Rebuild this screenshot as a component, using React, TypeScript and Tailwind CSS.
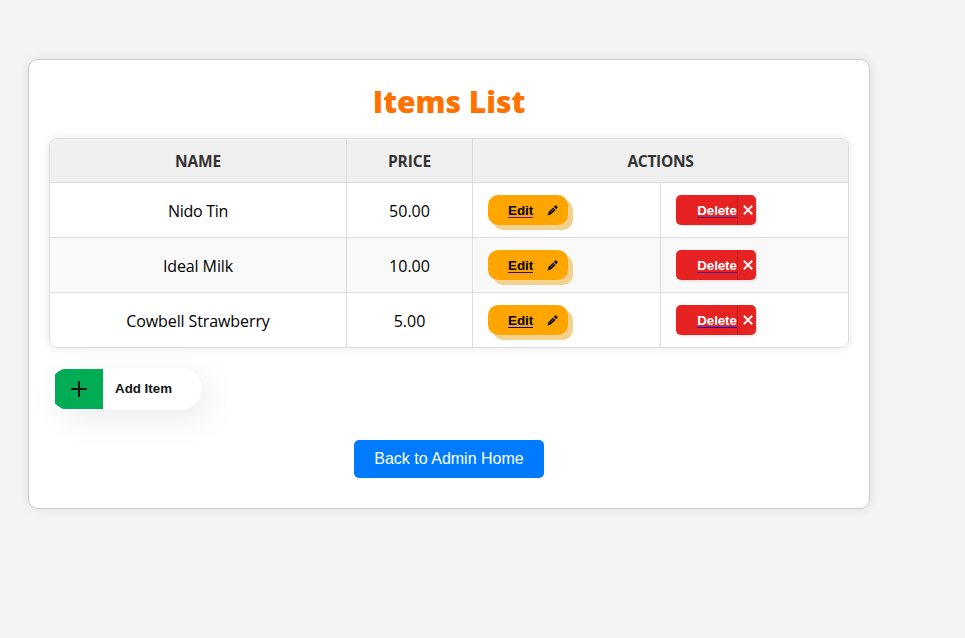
import React from "react";

type Item = { name: string; price: string; tracking: string; editLine: string; deleteLine: string };

const items: Item[] = [
  { name: "Nido Tin", price: "50.00", tracking: "tracking-[-0.3px]", editLine: "bg-[#551a8b]", deleteLine: "bg-[#551a8b]" },
  { name: "Ideal Milk", price: "10.00", tracking: "tracking-[-0.1px]", editLine: "bg-[#2a0bb0]", deleteLine: "bg-[#551a8b]" },
  { name: "Cowbell Strawberry", price: "5.00", tracking: "tracking-[-0.1px]", editLine: "bg-[#0000ee]", deleteLine: "bg-[#0000ee]" },
];

function EditButton({ line }: { line: string }) {
  return (
    <button className="flex h-[30px] w-[80px] items-center rounded-[10px] bg-[#ffa500] pl-5 font-['Liberation_Sans',Arial,sans-serif] text-[13.333px] font-bold text-black shadow-[5px_5px_0_#f3d18f]">
      <span className="mt-[2px] flex w-[25px] flex-col">
        <span className="h-[13px] leading-[14px]">Edit</span>
        <span className={`h-px w-full ${line}`} />
      </span>
      <svg className="ml-[14px] h-[11px] w-[11px]" viewBox="0 0 11 11" fill="#111">
        <path d="M7.6.9C8.2.3 9.2.3 9.8.8l.4.4c.6.6.6 1.5 0 2.1L9.3 4.2 6.7 1.8zM6.1 2.4l2.6 2.5-4.9 4.6L.5 10.5l1-3.5z" />
        <path d="M3.6 7.3l3.4-3.3" stroke="#b97800" strokeWidth=".6" />
      </svg>
    </button>
  );
}

function DeleteButton({ line }: { line: string }) {
  return (
    <button className="flex h-[30px] w-[80px] items-center overflow-hidden rounded-[5px] bg-[#e62222] pl-[21px] font-['Liberation_Sans',Arial,sans-serif] text-[13.333px] font-bold text-white shadow-[1px_1px_3px_rgba(0,0,0,0.15)]">
      <span className="mt-[2px] flex w-[40px] shrink-0 flex-col">
        <span className="h-[13px] whitespace-nowrap leading-[14px] tracking-[-0.1px]">Delete</span>
        <span className={`h-px w-full ${line}`} />
      </span>
      <span className="flex h-full flex-1 items-center border-l border-[#c41b1b] pl-[5px]">
        <svg className="h-[10px] w-[10px]" viewBox="0 0 10 10" stroke="#eee" strokeWidth="2.1" fill="none">
          <path d="M.7.7l8.6 8.6M9.3.7L.7 9.3" />
        </svg>
      </span>
    </button>
  );
}

export default function App() {
  return (
    <div className="min-h-screen bg-[#f4f4f4] pt-[59px] pl-7 font-['Open_Sans','Noto_Sans',sans-serif] text-base text-black">
      <main className="flex h-[450px] w-[842px] flex-col rounded-[10px] border border-[#ccc] bg-white px-5 shadow-[0_0_10px_rgba(0,0,0,0.1)]">
        <h1 className="mt-5 flex h-[42px] items-center justify-center text-[30px] font-extrabold text-[#ff7200]">
          <span className="whitespace-nowrap">Items List</span>
        </h1>
        <section className="mt-4 overflow-hidden rounded-[8px] border border-[#ddd] shadow-[0_0_10px_rgba(0,0,0,0.1)]">
          <div className="grid h-[43px] grid-cols-[296px_126px_376px] bg-[#f0f0f0] text-center text-[15.5px] font-bold tracking-[-0.1px] text-[#333]">
            <div className="flex items-center justify-center pt-[3px]">NAME</div>
            <div className="flex items-center justify-center border-l border-[#ddd] pt-[3px]">PRICE</div>
            <div className="flex items-center justify-center border-l border-[#ddd] pt-[3px] tracking-[-0.3px]">ACTIONS</div>
          </div>
          {items.map((item, i) => (
            <div key={item.name} className={`grid h-[55px] grid-cols-[296px_126px_188px_188px] border-t border-[#ddd] ${i === 1 ? "bg-[#f9f9f9]" : "bg-white"}`}>
              <div className={`flex items-center justify-center pt-[2px] ${item.tracking}`}>{item.name}</div>
              <div className="flex items-center justify-center border-l border-[#ddd] pt-[2px]">{item.price}</div>
              <div className="flex items-center border-l border-[#ddd] pl-[15px]"><EditButton line={item.editLine} /></div>
              <div className="flex items-center border-l border-[#ddd] pl-[15px]"><DeleteButton line={item.deleteLine} /></div>
            </div>
          ))}
        </section>
        <button className="mt-5 flex h-[42px] w-[153px] shrink-0 items-center overflow-hidden rounded-[21px] bg-white pl-[6px] font-['Liberation_Sans',Arial,sans-serif] text-[13.333px] font-bold text-[#131313] shadow-[9px_9px_33px_rgba(0,0,0,0.08)]">
          <span className="flex h-10 w-12 items-center justify-center bg-[#00ad54]">
            <svg className="h-4 w-4" viewBox="0 0 16 16" stroke="#131313" strokeWidth="2">
              <path d="M8 0v16M0 8h16" />
            </svg>
          </span>
          <span className="ml-3 whitespace-nowrap">Add Item</span>
        </button>
        <button className="mt-[30px] h-[38px] w-[190px] self-center rounded-[5px] bg-[#007bff] font-['Liberation_Sans',Arial,sans-serif] text-base text-white">
          Back to Admin Home
        </button>
      </main>
    </div>
  );
}
